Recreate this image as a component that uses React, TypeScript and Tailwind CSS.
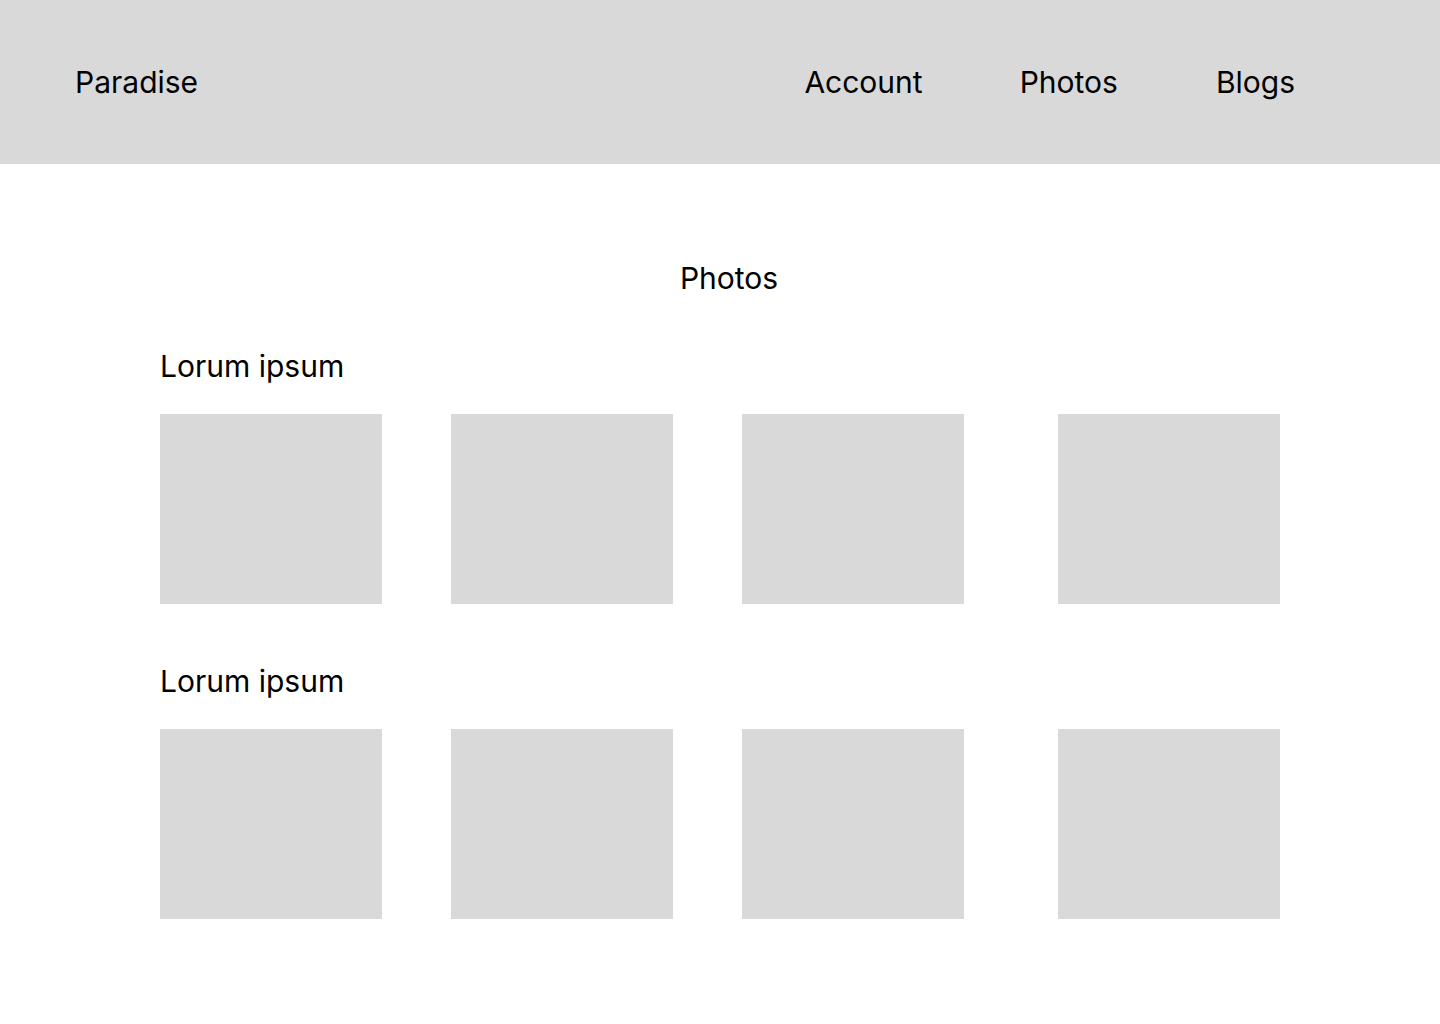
import React from "react";

function PhotoRow() {
  return (
    <div className="flex">
      <div className="w-[222px] h-[190px] bg-[#d9d9d9]" />
      <div className="w-[222px] h-[190px] bg-[#d9d9d9] ml-[69px]" />
      <div className="w-[222px] h-[190px] bg-[#d9d9d9] ml-[69px]" />
      <div className="w-[222px] h-[190px] bg-[#d9d9d9] ml-[94px]" />
    </div>
  );
}

export default function App() {
  return (
    <div className="min-h-screen bg-white text-black font-['Inter',sans-serif]">
      <header className="h-[164px] bg-[#d9d9d9] flex items-center pl-[75px]">
        <span className="text-[30px] leading-[40px]">Paradise</span>
        <nav className="ml-auto flex items-center mr-[145px]">
          <a href="#" className="text-[30px] leading-[40px]">Account</a>
          <a href="#" className="text-[30px] leading-[40px] ml-[97px]">Photos</a>
          <a href="#" className="text-[30px] leading-[40px] ml-[98px]">Blogs</a>
        </nav>
      </header>

      <main className="pt-[96px] pl-[160px]">
        <h1 className="text-[30px] leading-[36px] text-center w-[1138px]">Photos</h1>

        <section className="mt-[52px]">
          <h2 className="text-[30px] leading-[36px]">Lorum ipsum</h2>
          <div className="mt-[30px]">
            <PhotoRow />
          </div>
        </section>

        <section className="mt-[59px]">
          <h2 className="text-[30px] leading-[36px]">Lorum ipsum</h2>
          <div className="mt-[30px]">
            <PhotoRow />
          </div>
        </section>
      </main>
    </div>
  );
}
